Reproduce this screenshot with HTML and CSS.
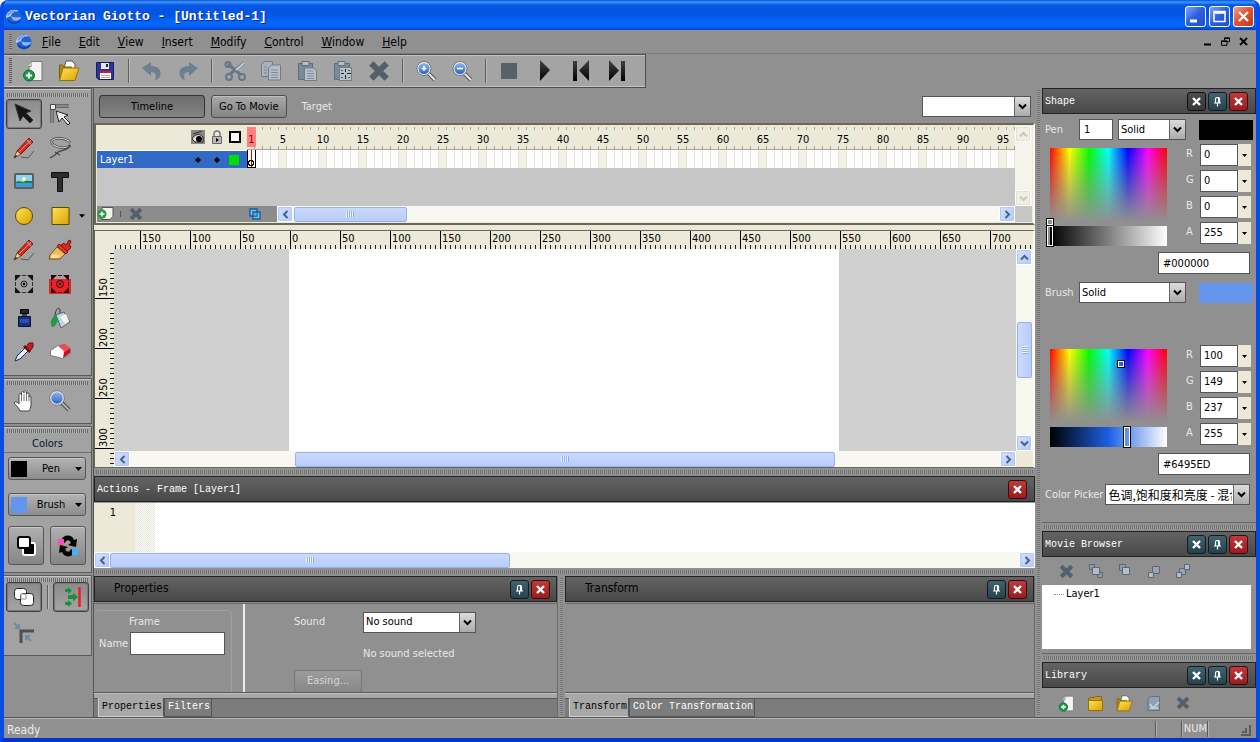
FILE: index.html
```html
<!DOCTYPE html>
<html lang="en">
<head>
    <meta charset="UTF-8">
    <meta name="viewport" content="width=device-width, initial-scale=1.0">
    <title>Vectorian Giotto - [Untitled-1]</title>
    <link rel="stylesheet" href="styles.css">
</head>
<body>
    <!-- shared icons -->
    <svg class="sprite" width="0" height="0">
        <defs>
            <linearGradient id="gold" x1="0" y1="0" x2="1" y2="1">
                <stop offset="0" stop-color="#ffe25a"/><stop offset="1" stop-color="#d9a300"/>
            </linearGradient>
            <linearGradient id="lens" x1="0" y1="0" x2="0" y2="1">
                <stop offset="0" stop-color="#8fb8f5"/><stop offset="1" stop-color="#2a63c4"/>
            </linearGradient>
            <linearGradient id="ink" x1="0" y1="0" x2="0" y2="1">
                <stop offset="0" stop-color="#444"/><stop offset="1" stop-color="#000"/>
            </linearGradient>
        </defs>
        <symbol id="i-x" viewBox="0 0 11 11"><path d="M2 2l7 7M9 2L2 9" stroke="#fff" stroke-width="2.4"/></symbol>
        <symbol id="i-pin" viewBox="0 0 11 11"><path d="M3.500 6.500V3a1.500 1.500 0 0 1 1.500-1.500h1.500V6.500M6.500 1.500a1 1 0 0 1 1 1v4M2 7h7M5.500 7v3.500" fill="none" stroke="#fff" stroke-width="1.200"/></symbol>
        <symbol id="i-chev" viewBox="0 0 9 9"><path d="M1 2.500l3.500 3.500L8 2.500" fill="none" stroke="currentColor" stroke-width="2"/></symbol>
        <symbol id="i-tri" viewBox="0 0 7 4"><path d="M0 0h7L3.500 4z" fill="currentColor"/></symbol>
        <symbol id="i-logo" viewBox="0 0 16 16">
            <circle cx="8" cy="8" r="7.500" fill="#1f62d6"/>
            <path d="M0 9C0 2 7-1 13 2C9 2 5 4 5 7z" fill="#c3d8f5"/>
            <path d="M1 6C3 1 9 0 13 3C9 2 5 3 3 7z" fill="#6f9ce6"/>
            <path d="M5 7c3 2 6 1 10 1c0 3-4 5-8 3z" fill="#8db8fa"/>
            <path d="M2 11c3 4 9 4 12 0" fill="none" stroke="#0c3fae" stroke-width="1.400"/>
        </symbol>
        <symbol id="i-new" viewBox="0 0 22 22">
            <path d="M9 1.500h11v19H7v-15z" fill="#f4f4f4" stroke="#777"/>
            <path d="M9 1.500v5H6" fill="#ddd" stroke="#888"/>
            <circle cx="7" cy="15.500" r="5.500" fill="#1f9a45" stroke="#0d6e2c"/>
            <path d="M7 12.500v6M4 15.500h6" stroke="#fff" stroke-width="2"/>
        </symbol>
        <symbol id="i-open" viewBox="0 0 22 22">
            <path d="M6 8l2-7h6l3 3v5H6z" fill="#fafafa" stroke="#555"/>
            <path d="M1.500 20V5h3l1 2h8v13z" fill="#b98a0c" stroke="#806000"/>
            <path d="M1.500 20.500L5 8h16l-4 12.500z" fill="url(#gold)" stroke="#94700a"/>
        </symbol>
        <symbol id="i-del" viewBox="0 0 20 20"><path d="M3 3l14 14M17 3L3 17" stroke="#53606c" stroke-width="5.500"/></symbol>
        <symbol id="i-pencil" viewBox="0 0 22 22">
            <path d="M8 20l7 1 6-7" fill="none" stroke="#555"/>
            <path d="M4 14L16 1l4 4L8 17z" fill="#e0291f" stroke="#7b1410"/>
            <path d="M6 15L18 3" stroke="#ff8a7a"/>
            <path d="M4 14l4 3-7 4z" fill="#f0d3a0" stroke="#6d4a20"/>
            <path d="M1 21l3-2-1-1z" fill="#000"/>
            <path d="M14 3l4 4" stroke="#999" stroke-width="1.500"/>
        </symbol>
    </svg>

    <div class="window">
        <header class="titlebar">
            <svg class="logo" width="16" height="16"><use href="#i-logo"/></svg>
            <h1 class="title">Vectorian Giotto - [Untitled-1]</h1>
            <button class="win-btn" aria-label="Minimize"><svg width="19" height="19"><path d="M4 14h7" stroke="#fff" stroke-width="3"/></svg></button>
            <button class="win-btn" aria-label="Maximize"><svg width="19" height="19"><path d="M4 4.500h11v10H4zM4 6h11" fill="none" stroke="#fff" stroke-width="1.500"/></svg></button>
            <button class="win-btn win-close" aria-label="Close"><svg width="19" height="19"><path d="M5 5l9 9M14 5l-9 9" stroke="#fff" stroke-width="2.200"/></svg></button>
        </header>

        <nav class="menubar">
            <span class="grip-v"></span>
            <svg class="logo" width="16" height="16"><use href="#i-logo"/></svg>
            <button class="menu"><u>F</u>ile</button>
            <button class="menu"><u>E</u>dit</button>
            <button class="menu"><u>V</u>iew</button>
            <button class="menu"><u>I</u>nsert</button>
            <button class="menu"><u>M</u>odify</button>
            <button class="menu"><u>C</u>ontrol</button>
            <button class="menu"><u>W</u>indow</button>
            <button class="menu"><u>H</u>elp</button>
            <span class="mdi">
                <button class="mdi-btn" aria-label="Minimize document"><svg width="9" height="9"><path d="M1 7.500h7" stroke="#000" stroke-width="2"/></svg></button>
                <button class="mdi-btn" aria-label="Restore document"><svg width="9" height="9"><path d="M3.500 3V.8h5v4H6.500M.5 3.800h5.500v4.500H.5zM3 1.500h6M.5 4.500h6" fill="none" stroke="#000"/></svg></button>
                <button class="mdi-btn" aria-label="Close document"><svg width="9" height="9"><path d="M1 1l7 7M8 1L1 8" stroke="#000" stroke-width="1.800"/></svg></button>
            </span>
        </nav>

        <div class="toolbar-row">
            <div class="toolbar">
                <span class="grip-v"></span>
                <button class="tb" aria-label="New"><svg width="22" height="22"><use href="#i-new"/></svg></button>
                <button class="tb" aria-label="Open"><svg width="22" height="22"><use href="#i-open"/></svg></button>
                <button class="tb" aria-label="Save"><svg width="22" height="22"><path d="M2.500 2.500h17v17h-15l-2-2z" fill="#2a35a0" stroke="#141c60"/><path d="M7 3h8v6H7z" fill="#e6e6ea"/><path d="M12 4h2v3h-2z" fill="#222"/><path d="M6 11h11v8H6z" fill="#fff"/><path d="M6 11h11v2H6z" fill="#d31d1d"/><path d="M7 15.500h9M7 17.500h9" stroke="#aaa"/></svg></button>
                <span class="sep"></span>
                <button class="tb" aria-label="Undo"><svg width="22" height="22"><path d="M1 8l9-6v4c8 0 11 5 9 10c-1 2-3 4-5 4c2-5 1-8-4-8v4z" fill="#6d7f90"/></svg></button>
                <button class="tb" aria-label="Redo"><svg width="22" height="22"><path d="M21 8l-9-6v4C4 6 1 11 3 16c1 2 3 4 5 4c-2-5-1-8 4-8v4z" fill="#6d7f90"/></svg></button>
                <span class="sep"></span>
                <button class="tb" aria-label="Cut"><svg width="22" height="22"><path d="M4 4l13 11M20 3L6 14" stroke="#66778a" stroke-width="3"/><path d="M20 3l-8 7" stroke="#c2ccd5" stroke-width="2"/><g fill="none" stroke="#66778a" stroke-width="2"><circle cx="4" cy="4.500" r="2.500"/><circle cx="5" cy="17" r="3"/><circle cx="18" cy="17" r="3"/></g></svg></button>
                <button class="tb" aria-label="Copy"><svg width="22" height="22"><path d="M1.500 4.500l3-3h8v15h-11z" fill="#a9b3bd" stroke="#6f7d8b"/><path d="M8.500 8l3-3h9v15h-12z" fill="#b7c0c9" stroke="#6f7d8b"/><path d="M11 10h7M11 12.500h7M11 15h7M11 17.500h7M4 7h3M4 10h3M4 13h3" stroke="#7d8a98"/></svg></button>
                <button class="tb" aria-label="Paste"><svg width="22" height="22"><path d="M2.500 3.500h14v16h-14z" fill="#7d8b99" stroke="#5d6d7d"/><path d="M6 1.500h7v4H6z" fill="#b7c0c9" stroke="#5d6d7d"/><path d="M8.500 8h9l3 3v9.500h-12z" fill="#b9c2cb" stroke="#6f7d8b"/><path d="M11 11h6M11 13.500h7M11 16h7M11 18.500h7" stroke="#7d8a98"/></svg></button>
                <button class="tb" aria-label="Paste in place"><svg width="22" height="22"><path d="M2.500 3.500h15v16h-15z" fill="#7d8b99" stroke="#5d6d7d"/><path d="M6 1.500h7v4H6z" fill="#b7c0c9" stroke="#5d6d7d"/><path d="M7.500 7.500h12v13h-12z" fill="#b9c2cb" stroke="#6f7d8b"/><path d="M13.500 9v3M13.500 15v4M9 13.500h3M15 13.500h4" stroke="#222"/><path d="M9 10.500h2M16 10.500h2M9 17.500h2M16 17.500h2" stroke="#556"/></svg></button>
                <button class="tb" aria-label="Delete"><svg width="22" height="22"><use href="#i-del"/></svg></button>
                <span class="sep"></span>
                <button class="tb" aria-label="Zoom in"><svg width="22" height="22"><path d="M13 13l7 7" stroke="#555" stroke-width="4"/><path d="M13 13l7 7" stroke="#e8e8e8" stroke-width="2"/><circle cx="9" cy="8.500" r="7" fill="#eee" stroke="#777"/><circle cx="9" cy="8.500" r="5.500" fill="url(#lens)"/><path d="M9 6v5M6.500 8.500h5" stroke="#fff" stroke-width="1.600"/></svg></button>
                <button class="tb" aria-label="Zoom out"><svg width="22" height="22"><path d="M13 13l7 7" stroke="#555" stroke-width="4"/><path d="M13 13l7 7" stroke="#e8e8e8" stroke-width="2"/><circle cx="9" cy="8.500" r="7" fill="#eee" stroke="#777"/><circle cx="9" cy="8.500" r="5.500" fill="url(#lens)"/><path d="M6 8.500h6" stroke="#fff" stroke-width="1.600"/></svg></button>
                <span class="sep"></span>
                <button class="tb" aria-label="Stop"><svg width="22" height="22"><path d="M3 3h16v16H3z" fill="#596067"/></svg></button>
                <button class="tb" aria-label="Play"><svg width="22" height="22"><path d="M6 0l10 10-10 11z" fill="url(#ink)"/></svg></button>
                <button class="tb" aria-label="Go to start"><svg width="22" height="22"><path d="M3 1h4v20H3zM19 0L9 10.500 19 21z" fill="url(#ink)"/></svg></button>
                <button class="tb" aria-label="Go to end"><svg width="22" height="22"><path d="M15 1h4v20h-4zM3 0l10 10.500L3 21z" fill="url(#ink)"/></svg></button>
            </div>
        </div>

        <main class="main">
            <!-- toolbox -->
            <aside class="toolbox">
                <div class="box">
                    <span class="grip-h"></span>
                    <div class="tools">
                        <button class="tool selected" aria-label="Select"><svg width="22" height="22"><path d="M2 1l16 7-5 2 7 7-3 3-7-7-3 5z" fill="#151515" stroke="#333"/></svg></button>
                        <button class="tool" aria-label="Subselect"><svg width="22" height="22"><path d="M3 20V3h17" fill="none" stroke="#333" stroke-width="3"/><path d="M3 20V3h17" fill="none" stroke="#ddd"/><path d="M1.500 1.500h5v5h-5z" fill="#eee" stroke="#444"/><path d="M7 8l12 4-4 2 6 6-2 2-6-7-3 4z" fill="#eee" stroke="#222"/></svg></button>
                        <span></span>
                        <button class="tool" aria-label="Pencil"><svg width="22" height="22"><use href="#i-pencil"/></svg></button>
                        <button class="tool" aria-label="Lasso"><svg width="22" height="22"><ellipse cx="12" cy="6" rx="9.500" ry="4.500" fill="none" stroke="#444" stroke-width="2.500" transform="rotate(8 12 6)"/><ellipse cx="12" cy="6" rx="9.500" ry="4.500" fill="none" stroke="#ccc" transform="rotate(8 12 6)"/><path d="M21 8c-1 4-6 5-12 7l-3 3-5 3M6 15l5 3" fill="none" stroke="#444" stroke-width="1.300"/></svg></button>
                        <span></span>
                        <button class="tool" aria-label="Image"><svg width="22" height="22"><rect x="1" y="2" width="20" height="16" rx="2" fill="#5a5f66"/><path d="M3 4h16v12H3z" fill="#8fd0f5"/><path d="M3 12h16v4H3z" fill="#3e9ad8"/><path d="M3 11c3-2 5 0 7 0c3-2 6-1 9-1v2H3z" fill="#27803a"/><circle cx="11" cy="8" r="2" fill="#fff8a0"/></svg></button>
                        <button class="tool" aria-label="Text"><svg width="22" height="22"><path d="M2.500 1.500h17v5h-6v14h-5v-14h-6z" fill="#2d2d2d" stroke="#111"/></svg></button>
                        <span></span>
                        <button class="tool" aria-label="Ellipse"><svg width="22" height="22"><circle cx="11" cy="11" r="8.500" fill="url(#gold)" stroke="#5d4800"/></svg></button>
                        <button class="tool" aria-label="Rectangle"><svg width="22" height="22"><path d="M3 2.500h17v17H3z" fill="url(#gold)" stroke="#5d4800"/></svg></button>
                        <button class="tool-more" aria-label="More shapes"><svg width="6" height="4"><use href="#i-tri"/></svg></button>
                        <button class="tool" aria-label="Pen"><svg width="22" height="22"><use href="#i-pencil"/></svg></button>
                        <button class="tool" aria-label="Brush"><svg width="24" height="22"><path d="M13 6l3-2 2 2 3-5 2 1-2 5 2 0-1 3-5 3z" fill="#dd2a20" stroke="#7d1510"/><path d="M11 5l9 8-2 2-9-8z" fill="#e63a2e" stroke="#7d1510"/><path d="M9 8l8 7-5 5H1l1-4z" fill="#f0b95a" stroke="#80520f"/><path d="M4 15l8 1-2 3H3z" fill="#fbe0a5"/></svg></button>
                        <span></span>
                        <button class="tool" aria-label="Transform shape"><svg width="22" height="22"><path d="M2 2h6L2 8zM14 2h6v6zM20 14v6h-6zM8 20H2v-6z" fill="#111"/><path d="M9 2.500h4M9 19.500h4M2.500 9v4M19.500 9v4" stroke="#333"/><circle cx="11" cy="11" r="3" fill="none" stroke="#222"/><circle cx="11" cy="11" r="1.200"/></svg></button>
                        <button class="tool" aria-label="Transform fill"><svg width="22" height="22"><path d="M0 6h22v15H0z" fill="#e8232b"/><path d="M2 2h6L2 8zM14 2h6v6zM20 14v6h-6zM8 20H2v-6z" fill="#2a0505"/><path d="M9 2.500h4M9 19.500h4M2.500 9v4M19.500 9v4" stroke="#300"/><circle cx="11" cy="11" r="3.500" fill="none" stroke="#300"/><circle cx="11" cy="11" r="1.200"/></svg></button>
                        <span></span>
                        <button class="tool" aria-label="Ink bottle"><svg width="22" height="22"><path d="M7.500 2.500h8v4h-8z" fill="#222" stroke="#000"/><path d="M9 7h5v3H9z" fill="#345"/><path d="M5.500 9.500h12v10h-12z" fill="#16307e" stroke="#0a143d"/><path d="M7 12h9v4H7z" fill="#2c4fb0"/></svg></button>
                        <button class="tool" aria-label="Paint bucket"><svg width="22" height="22"><path d="M6 10C6 2 10-1 11 3v6" fill="none" stroke="#333"/><path d="M7 8l8-3 6 10-9 6z" fill="#c3d4de" stroke="#56646e"/><path d="M11 10l6-3 3 7-4 3z" fill="#eaf3f8"/><path d="M7 8c-6 3-6 9-4 12c4 0 4-4 6-6z" fill="#219a45"/></svg></button>
                        <span></span>
                        <button class="tool" aria-label="Eyedropper"><svg width="22" height="22"><path d="M2 20l2-5 9-9 3 3-9 9z" fill="#e9eefc" stroke="#16257a"/><path d="M11 5l6 6" stroke="#6d0f0f" stroke-width="2.500"/><path d="M13 6l3-4h4v4l-3 4z" fill="#c31d1d" stroke="#6d0f0f"/></svg></button>
                        <button class="tool" aria-label="Eraser"><svg width="22" height="22"><path d="M1.500 9.500l8-5 6-1 6 4v5l-8 5-12-3z" fill="#fff" stroke="#777"/><path d="M9 5l7-2 5 4-6 4z" fill="#f4474f"/><path d="M15 11l6-4v5l-7 5z" fill="#c3121b"/><path d="M2 10l7-5 6 5-2 2z" fill="#fdfdfd"/></svg></button>
                        <span></span>
                    </div>
                </div>
                <div class="box">
                    <span class="grip-h"></span>
                    <div class="tools">
                        <button class="tool" aria-label="Hand"><svg width="22" height="22"><path d="M7 21c-1-3-4-6-6-8c1-2 3-1 5 1V5c0-2 2-2 2.500 0V3c0-2 2.500-2 2.500 0V2c0-2 2.500-1.500 2.500 0v2c0-1.500 2.500-1.500 2.500 0v3c0-1.500 2-1.500 2 0v8c0 3-1 4-2 6z" fill="#fff" stroke="#444"/><path d="M8.500 5v6M11 4v7M13.500 4v7M16 6v5" stroke="#777"/></svg></button>
                        <button class="tool" aria-label="Zoom"><svg width="22" height="22"><path d="M12 12l8 8" stroke="#555" stroke-width="4"/><path d="M12 12l8 8" stroke="#ccc" stroke-width="1.500"/><circle cx="8" cy="8" r="6.500" fill="url(#lens)" stroke="#e6e6e6" stroke-width="1.500"/><circle cx="8" cy="8" r="7.300" fill="none" stroke="#555" stroke-width=".6"/></svg></button>
                        <span></span>
                    </div>
                </div>
                <div class="box colors">
                    <span class="grip-h"></span>
                    <h2 class="box-title">Colors</h2>
                    <button class="color-btn"><i class="chip chip-pen"></i>Pen<svg width="7" height="4"><use href="#i-tri"/></svg></button>
                    <button class="color-btn"><i class="chip chip-brush"></i>Brush<svg width="7" height="4"><use href="#i-tri"/></svg></button>
                    <div class="big-row">
                        <button class="big-btn" aria-label="Default colors"><svg width="22" height="22"><rect x="8" y="8" width="12" height="12" rx="2" stroke="#fff" stroke-width="2"/><rect x="3" y="2" width="12" height="11" rx="2" fill="#fff" stroke="#000" stroke-width="2"/></svg></button>
                        <button class="big-btn" aria-label="Swap colors"><svg width="22" height="24"><path d="M4 7C6 0 15 0 17 6l3-1-1 8-8-2 3-2C12 5 9 6 8 9z"/><path d="M18 17C16 24 7 24 5 18l-3 1 1-8 8 2-3 2c2 4 5 3 6 0z"/><path d="M1 5h6v6H1z" fill="#ff4fb5"/><path d="M15 15h6v6h-6z" fill="#35b8ff"/></svg></button>
                    </div>
                </div>
                <div class="box options">
                    <span class="grip-h"></span>
                    <div class="option-row">
                        <button class="tool selected" aria-label="Merge shapes"><svg width="22" height="22"><rect x="1.500" y="2.500" width="12" height="11" rx="3" fill="#fff" stroke="#222"/><rect x="7.500" y="7.500" width="13" height="12" rx="3" fill="#fff" stroke="#222"/><path d="M8 8h5v5H8z" fill="#fff" stroke="#999"/></svg></button>
                        <span class="sep"></span>
                        <button class="tool selected" aria-label="Snap"><svg width="22" height="22"><path d="M19.500 1v20" stroke="#f01c24" stroke-width="2.500"/><path d="M5 3h3V1l4 3.500L8 8V6H5zM5 16h3v-2l4 3.500L8 21v-2H5zM8 9h5V6.500l5 4.500-5 4.500V13H8z" fill="#16923a"/></svg></button>
                    </div>
                    <button class="tool" aria-label="Snap to corner"><svg width="22" height="22"><path d="M8 21V9h13" fill="none" stroke="#4f4f4f" stroke-width="3"/><path d="M18 19l-5-5m0 4v-4h4M1 1l5 5m0-4v4H2" fill="none" stroke="#6d8aa3" stroke-width="2"/></svg></button>
                </div>
            </aside>

            <div class="center">
                <div class="scene-bar">
                    <button class="btn pressed">Timeline</button>
                    <button class="btn">Go To Movie</button>
                    <label class="light" for="target">Target</label>
                    <span class="combo combo-zoom"><select id="target"><option></option></select><svg width="9" height="9"><use href="#i-chev"/></svg></span>
                </div>

                <!-- timeline -->
                <div class="timeline">
                    <div class="tl-top">
                        <div class="layers">
                            <div class="layers-head">
                                <svg width="14" height="14"><path d="M0 0h14v14H0z" fill="#888"/><path d="M1 9c2-5 8-6 11-2v5H4z" fill="#ddd" stroke="#222"/><circle cx="8" cy="9" r="3"/><path d="M2 4l9-3" stroke="#333"/></svg>
                                <svg width="12" height="14"><path d="M3 7V4c0-4 6-4 6 0v3" fill="none" stroke="#777" stroke-width="1.500"/><path d="M1.500 6.500h9v7h-9z" fill="#bbb" stroke="#666"/><path d="M5 8l3 2-3 2z"/></svg>
                                <svg width="12" height="12"><path d="M1 1h10v10H1z" fill="#fff" stroke="#000" stroke-width="2"/></svg>
                            </div>
                            <div class="layer">
                                <span class="layer-name">Layer1</span>
                                <svg width="14" height="6"><path d="M7 0l3 3-3 3-3-3z"/></svg>
                                <svg width="12" height="6"><path d="M6 0l3 3-3 3-3-3z"/></svg>
                                <i class="layer-color"></i>
                            </div>
                        </div>
                        <div class="frames">
                            <div class="frames-head">
                                <span class="playhead">1</span>
                                <span>5</span><span>10</span><span>15</span><span>20</span><span>25</span><span>30</span><span>35</span><span>40</span><span>45</span><span>50</span><span>55</span><span>60</span><span>65</span><span>70</span><span>75</span><span>80</span><span>85</span><span>90</span><span>95</span>
                            </div>
                            <div class="frames-row"><span class="keyframe"></span></div>
                        </div>
                        <div class="scroll scroll-v disabled">
                            <button aria-label="Scroll up"><svg class="up" width="9" height="9"><use href="#i-chev"/></svg></button>
                            <span class="track"></span>
                            <button aria-label="Scroll down"><svg width="9" height="9"><use href="#i-chev"/></svg></button>
                        </div>
                    </div>
                    <div class="tl-bottom">
                        <div class="layer-tools">
                            <button aria-label="Add layer"><svg width="17" height="16"><path d="M5 1.500h11v9l-3 3H5z" fill="#f4f4ea" stroke="#555"/><circle cx="5" cy="8" r="4.500" fill="#1f9a45"/><path d="M5 5.500v5M2.500 8h5" stroke="#fff" stroke-width="1.500"/></svg></button>
                            <i class="mini-sep"></i>
                            <button aria-label="Delete layer"><svg width="14" height="14"><use href="#i-del"/></svg></button>
                            <button class="onion" aria-label="Onion skin"><svg width="12" height="12"><path d="M1 1h7v7H1zM4 4h7v7H4z" fill="#6fc4f0" stroke="#0b5fa5" stroke-width="1.300"/><path d="M5 5h2.500v2.500H5z" fill="#9a9a9a"/></svg></button>
                        </div>
                        <div class="scroll scroll-h">
                            <button aria-label="Scroll left"><svg class="left" width="9" height="9"><use href="#i-chev"/></svg></button>
                            <span class="track"><i class="thumb thumb-timeline"></i></span>
                            <button aria-label="Scroll right"><svg class="right" width="9" height="9"><use href="#i-chev"/></svg></button>
                        </div>
                        <span class="tl-corner"></span>
                    </div>
                </div>

                <!-- stage -->
                <div class="stage">
                    <div class="ruler-h">
                        <span>150</span><span>100</span><span>50</span><span>0</span><span>50</span><span>100</span><span>150</span><span>200</span><span>250</span><span>300</span><span>350</span><span>400</span><span>450</span><span>500</span><span>550</span><span>600</span><span>650</span><span>700</span>
                    </div>
                    <div class="ruler-v"><span>150</span><span>200</span><span>250</span><span>300</span></div>
                    <div class="canvas"><div class="page"></div></div>
                    <div class="scroll scroll-v">
                        <button aria-label="Scroll up"><svg class="up" width="9" height="9"><use href="#i-chev"/></svg></button>
                        <span class="track"><i class="thumb thumb-stage-v"></i></span>
                        <button aria-label="Scroll down"><svg width="9" height="9"><use href="#i-chev"/></svg></button>
                    </div>
                    <div class="scroll scroll-h">
                        <button aria-label="Scroll left"><svg class="left" width="9" height="9"><use href="#i-chev"/></svg></button>
                        <span class="track"><i class="thumb thumb-stage-h"></i></span>
                        <button aria-label="Scroll right"><svg class="right" width="9" height="9"><use href="#i-chev"/></svg></button>
                    </div>
                </div>

                <div class="split-h"></div>

                <!-- actions -->
                <section class="panel">
                    <div class="panel-head">
                        <h2>Actions - Frame [Layer1]</h2>
                        <button class="head-btn red" aria-label="Close"><svg width="11" height="11"><use href="#i-x"/></svg></button>
                    </div>
                    <div class="code">
                        <span class="line-no">1</span>
                        <i class="fold"></i>
                        <textarea class="code-text" aria-label="Script"></textarea>
                    </div>
                    <div class="scroll scroll-h">
                        <button aria-label="Scroll left"><svg class="left" width="9" height="9"><use href="#i-chev"/></svg></button>
                        <span class="track"><i class="thumb thumb-code"></i></span>
                        <button aria-label="Scroll right"><svg class="right" width="9" height="9"><use href="#i-chev"/></svg></button>
                    </div>
                </section>

                <div class="split-h"></div>

                <div class="bottom">
                    <section class="panel properties">
                        <div class="panel-head dim">
                            <h2>Properties</h2>
                            <button class="head-btn" aria-label="Pin"><svg width="11" height="11"><use href="#i-pin"/></svg></button>
                            <button class="head-btn red" aria-label="Close"><svg width="11" height="11"><use href="#i-x"/></svg></button>
                        </div>
                        <div class="prop-body">
                            <div class="frame-box">
                                <h3>Frame</h3>
                                <div class="name-row">
                                    <label for="frame-name">Name</label>
                                    <input class="field" id="frame-name" type="text">
                                </div>
                            </div>
                            <div class="sound">
                                <label for="sound">Sound</label>
                                <span class="combo"><select id="sound"><option>No sound</option></select><svg width="9" height="9"><use href="#i-chev"/></svg></span>
                                <p class="sound-note">No sound selected</p>
                                <button class="btn easing" disabled>Easing...</button>
                            </div>
                        </div>
                        <div class="tabs"><button class="tab active">Properties</button><button class="tab">Filters</button></div>
                    </section>
                    <div class="split-v"></div>
                    <section class="panel transform">
                        <div class="panel-head dim">
                            <h2>Transform</h2>
                            <button class="head-btn" aria-label="Pin"><svg width="11" height="11"><use href="#i-pin"/></svg></button>
                            <button class="head-btn red" aria-label="Close"><svg width="11" height="11"><use href="#i-x"/></svg></button>
                        </div>
                        <div class="prop-body"></div>
                        <div class="tabs"><button class="tab active">Transform</button><button class="tab">Color Transformation</button></div>
                    </section>
                </div>
            </div>

            <div class="split-v"></div>

            <!-- right dock -->
            <aside class="dock">
                <section class="panel shape">
                    <div class="panel-head">
                        <h2>Shape</h2>
                        <button class="head-btn dark" aria-label="Collapse"><svg width="11" height="11"><use href="#i-x"/></svg></button>
                        <button class="head-btn" aria-label="Pin"><svg width="11" height="11"><use href="#i-pin"/></svg></button>
                        <button class="head-btn red" aria-label="Close"><svg width="11" height="11"><use href="#i-x"/></svg></button>
                    </div>
                    <div class="shape-body">
                        <div class="fill-row">
                            <label for="pen-size">Pen</label>
                            <input class="field pen-size" id="pen-size" type="text" value="1">
                            <span class="combo"><select aria-label="Pen style"><option>Solid</option></select><svg width="9" height="9"><use href="#i-chev"/></svg></span>
                            <i class="swatch chip-pen"></i>
                        </div>
                        <div class="color-area">
                            <div class="picker">
                                <div class="spectrum"><i class="spot spot-pen"></i></div>
                                <div class="shade shade-pen"><i class="slider slider-pen"></i></div>
                            </div>
                            <div class="channels">
                                <label for="pen-r">R</label><span class="spin"><input id="pen-r" type="text" value="0"><button aria-label="Red"><svg width="5" height="3"><use href="#i-tri"/></svg></button></span>
                                <label for="pen-g">G</label><span class="spin"><input id="pen-g" type="text" value="0"><button aria-label="Green"><svg width="5" height="3"><use href="#i-tri"/></svg></button></span>
                                <label for="pen-b">B</label><span class="spin"><input id="pen-b" type="text" value="0"><button aria-label="Blue"><svg width="5" height="3"><use href="#i-tri"/></svg></button></span>
                                <label for="pen-a">A</label><span class="spin"><input id="pen-a" type="text" value="255"><button aria-label="Alpha"><svg width="5" height="3"><use href="#i-tri"/></svg></button></span>
                            </div>
                        </div>
                        <input class="field hex" type="text" value="#000000" aria-label="Pen color">
                        <div class="fill-row">
                            <label for="brush-style">Brush</label>
                            <span class="combo"><select id="brush-style"><option>Solid</option></select><svg width="9" height="9"><use href="#i-chev"/></svg></span>
                            <i class="swatch chip-brush"></i>
                        </div>
                        <div class="color-area brush-area">
                            <div class="picker">
                                <div class="spectrum"><i class="spot spot-brush"></i></div>
                                <div class="shade shade-brush"><i class="slider slider-brush"></i></div>
                            </div>
                            <div class="channels">
                                <label for="brush-r">R</label><span class="spin"><input id="brush-r" type="text" value="100"><button aria-label="Red"><svg width="5" height="3"><use href="#i-tri"/></svg></button></span>
                                <label for="brush-g">G</label><span class="spin"><input id="brush-g" type="text" value="149"><button aria-label="Green"><svg width="5" height="3"><use href="#i-tri"/></svg></button></span>
                                <label for="brush-b">B</label><span class="spin"><input id="brush-b" type="text" value="237"><button aria-label="Blue"><svg width="5" height="3"><use href="#i-tri"/></svg></button></span>
                                <label for="brush-a">A</label><span class="spin"><input id="brush-a" type="text" value="255"><button aria-label="Alpha"><svg width="5" height="3"><use href="#i-tri"/></svg></button></span>
                            </div>
                        </div>
                        <input class="field hex" type="text" value="#6495ED" aria-label="Brush color">
                        <div class="picker-row">
                            <label for="color-picker">Color Picker</label>
                            <span class="combo combo-cjk"><select id="color-picker"><option>色调,饱和度和亮度 - 混合</option></select><svg width="9" height="9"><use href="#i-chev"/></svg></span>
                        </div>
                    </div>
                </section>
                <div class="split-h"></div>
                <section class="panel movie">
                    <div class="panel-head">
                        <h2>Movie Browser</h2>
                        <button class="head-btn" aria-label="Collapse"><svg width="11" height="11"><use href="#i-x"/></svg></button>
                        <button class="head-btn" aria-label="Pin"><svg width="11" height="11"><use href="#i-pin"/></svg></button>
                        <button class="head-btn red" aria-label="Close"><svg width="11" height="11"><use href="#i-x"/></svg></button>
                    </div>
                    <div class="dock-tools">
                        <button aria-label="Delete"><svg width="15" height="15"><use href="#i-del"/></svg></button>
                        <button aria-label="Bring to front"><svg width="16" height="16"><g fill="#8e9aa6" stroke="#56697c"><path d="M1.500 1.500h5v5h-5zM9.500 9.500h5v5h-5z"/><path d="M4.500 4.500h7v7h-7z" fill="#b5bec7"/></g></svg></button>
                        <button aria-label="Bring forward"><svg width="16" height="16"><g fill="#8e9aa6" stroke="#56697c"><path d="M2.500 1.500h6v6h-6z"/><path d="M5.500 4.500h7v7h-7z" fill="#b5bec7"/></g></svg></button>
                        <button aria-label="Send backward"><svg width="16" height="16"><g fill="#9aa5b0" stroke="#56697c"><path d="M6.500 3.500h7v7h-7z"/><path d="M2.500 9.500h5v5h-5z" fill="#b5bec7"/></g></svg></button>
                        <button aria-label="Send to back"><svg width="16" height="16"><g fill="#9aa5b0" stroke="#56697c"><path d="M4.500 5.500h6v6h-6z"/><path d="M9.500 1.500h5v5h-5zM1.500 9.500h5v5h-5z" fill="#b5bec7"/></g></svg></button>
                    </div>
                    <ul class="tree"><li>Layer1</li></ul>
                </section>
                <div class="split-h"></div>
                <section class="panel library">
                    <div class="panel-head">
                        <h2>Library</h2>
                        <button class="head-btn" aria-label="Collapse"><svg width="11" height="11"><use href="#i-x"/></svg></button>
                        <button class="head-btn" aria-label="Pin"><svg width="11" height="11"><use href="#i-pin"/></svg></button>
                        <button class="head-btn red" aria-label="Close"><svg width="11" height="11"><use href="#i-x"/></svg></button>
                    </div>
                    <div class="dock-tools">
                        <button aria-label="New symbol"><svg width="17" height="17"><use href="#i-new"/></svg></button>
                        <button aria-label="New folder"><svg width="17" height="17"><path d="M1.500 15V3.500l3-1h3l1-1h6v13" fill="#c89a12" stroke="#8a6708"/><path d="M1.500 5.500h14v10h-14z" fill="url(#gold)" stroke="#94700a"/></svg></button>
                        <button aria-label="Open library"><svg width="17" height="17"><use href="#i-open"/></svg></button>
                        <button aria-label="Properties"><svg width="17" height="17"><path d="M3 3.500l3-2h8.500v14H3z" fill="#8fa0b0" stroke="#607385"/><path d="M5 9l3 4 6-6M5 13h8" fill="none" stroke="#c9d4de" stroke-width="1.500"/></svg></button>
                        <button aria-label="Delete"><svg width="14" height="14"><use href="#i-del"/></svg></button>
                    </div>
                </section>
            </aside>
        </main>

        <footer class="statusbar">
            <span class="status-text">Ready</span>
            <span class="status-cell"></span>
            <span class="status-cell">NUM</span>
            <span class="status-end"><svg width="12" height="12"><path d="M9 0v10H0M5 3v4H1" fill="none" stroke="#5d5d5d" stroke-width="2"/></svg></span>
        </footer>
    </div>
</body>
</html>
```
FILE: styles.css
```css
* {
    margin: 0;
    padding: 0;
    box-sizing: border-box;
}

body {
    font-family: "DejaVu Sans Condensed", "Noto Sans", "Noto Sans CJK SC", sans-serif;
    font-size: 11px;
    line-height: 14px;
    color: #000;
    background: #fff;
}

button,
input,
select,
textarea {
    font: inherit;
    color: inherit;
    border: none;
    background: none;
    border-radius: 0;
    outline: none;
}

button {
    display: flex;
    align-items: center;
    justify-content: center;
}

svg {
    display: block;
    flex: none;
}

h1, h2, h3 {
    font-size: inherit;
    font-weight: normal;
}

label {
    color: #e8e8e8;
}

.sprite {
    position: absolute;
}

.window {
    height: 100vh;
    min-height: 700px;
    display: flex;
    flex-direction: column;
    background: #909090;
    border: 4px solid #0a4be6;
    border-top: none;
    border-bottom-color: #0334c9;
    border-radius: 8px 8px 0 0;
    overflow: hidden;
}

/* title bar */
.titlebar {
    flex: none;
    height: 30px;
    margin: 0 -4px;
    padding: 3px 6px 0;
    display: flex;
    align-items: center;
    gap: 3px;
    background: linear-gradient(#0a50d8 0, #3f96ff 2px, #0557e4 5px, #0354e2 14px, #0465fb 22px, #0465fb 26px, #033fd0 30px);
}

.title {
    flex: 1;
    font-family: "Liberation Mono", monospace;
    font-size: 13px;
    font-weight: bold;
    color: #fff;
    text-shadow: 1px 1px 0 #0a2a80;
    white-space: pre;
}

.win-btn {
    width: 21px;
    height: 21px;
    border: 1px solid #fff;
    border-radius: 3px;
    background: linear-gradient(135deg, #7ea3f5, #2a5ee0 50%, #1c50d0);
}

.win-close {
    background: linear-gradient(135deg, #f0a088, #e0502c 50%, #c5391a);
}

/* menu */
.menubar {
    flex: none;
    height: 24px;
    padding: 0 8px 0 5px;
    display: flex;
    align-items: center;
    font-size: 12px;
    border-bottom: 1px solid #7a7a7a;
}

.menubar .logo {
    margin: 0 1px 0 4px;
}

.menu {
    padding: 0 9px;
}

.mdi {
    margin-left: auto;
    display: flex;
    gap: 9px;
}

.mdi-btn {
    width: 9px;
    height: 9px;
}

.grip-v {
    width: 3px;
    height: 16px;
    background: repeating-linear-gradient(#5f5f5f 0 1px, #a0a0a0 1px 2px);
}

.grip-h {
    display: block;
    height: 4px;
    margin: 0 1px;
    background: repeating-linear-gradient(90deg, #6a6a6a 0 1px, #b0b0b0 1px 2px);
}

/* main toolbar */
.toolbar-row {
    flex: none;
    height: 34px;
    display: flex;
}

.toolbar {
    display: flex;
    align-items: center;
    gap: 4px;
    padding: 0 12px 0 5px;
    background: #a4a4a4;
    border: 1px solid #4e4e4e;
    border-left: none;
    box-shadow: inset 0 1px 0 #c2c2c2, inset 0 -1px 0 #c2c2c2;
}

.toolbar .grip-v {
    height: 26px;
    margin-right: 1px;
}

.tb {
    width: 32px;
    height: 28px;
}

.sep {
    width: 1px;
    height: 24px;
    margin: 0 3px;
    background: #5e5e5e;
    box-shadow: 1px 0 0 #bbb;
}

.main {
    flex: 1;
    min-height: 0;
    display: flex;
}

/* toolbox */
.toolbox {
    flex: none;
    width: 88px;
    margin-right: 2px;
}

.box {
    padding: 4px 2px 8px;
    margin-bottom: 2px;
    background: #a2a2a2;
    border: 1px solid #5a5a5a;
    border-left: none;
    box-shadow: inset 0 1px 0 #c4c4c4;
}

.tools {
    display: grid;
    grid-template-columns: 36px 36px 8px;
    gap: 4px 0;
    margin-top: 2px;
}

.tool {
    width: 36px;
    height: 30px;
}

.tool.selected {
    border: 1px solid #3f3f3f;
    border-radius: 3px;
    background: linear-gradient(#8a8a8a, #a6a6a6);
    box-shadow: inset 0 0 1px 1px #777;
}

.box .tools .tool-more {
    width: 8px;
}

.box + .box {
    padding-top: 2px;
    padding-bottom: 7px;
}

.box + .box .tools {
    margin-top: 1px;
}

.box-title {
    text-align: center;
    color: #0a1430;
    margin: 4px -2px 0;
    padding-bottom: 1px;
    border-bottom: 1px solid #707070;
}

.color-btn {
    width: 78px;
    height: 23px;
    margin: 4px auto 13px 2px;
    padding: 0 3px 0 2px;
    justify-content: space-between;
    border: 1px solid #555;
    border-radius: 3px;
    background: linear-gradient(#b4b4b4, #8c8c8c);
    box-shadow: inset 0 1px 0 #c8c8c8;
}

.color-btn + .color-btn {
    margin-bottom: 10px;
}

.chip {
    width: 16px;
    height: 16px;
}

.chip-pen {
    background: #000;
}

.chip-brush {
    background: #6495ed;
}

.big-row {
    display: flex;
    gap: 6px;
    padding-left: 2px;
}

.big-btn {
    width: 36px;
    height: 39px;
    border: 1px solid #555;
    border-radius: 3px;
    background: linear-gradient(#b0b0b0, #858585);
    box-shadow: inset 0 1px 0 #c8c8c8;
}

.option-row {
    display: flex;
    align-items: center;
    justify-content: space-between;
    margin: 0 0 6px;
}

/* buttons and fields */
.btn {
    height: 23px;
    padding: 0 7px;
    border: 1px solid #4c4c4c;
    border-radius: 3px;
    background: linear-gradient(#a8a8a8, #858585);
    box-shadow: inset 0 1px 0 #c0c0c0;
}

.btn.pressed {
    width: 106px;
    border-color: #333;
    background: linear-gradient(#6c6c6c, #848484);
    box-shadow: none;
}

.combo {
    position: relative;
    display: flex;
    height: 21px;
    background: #fff;
    border: 1px solid #555;
}

.combo select {
    appearance: none;
    flex: 1;
    width: 100%;
    padding: 0 17px 0 2px;
}

.combo svg {
    position: absolute;
    top: 0;
    right: 0;
    width: 16px;
    height: 19px;
    padding: 5px 3px;
    background: linear-gradient(#dcdcdc, #ababab);
    border-left: 1px solid #666;
    pointer-events: none;
}

.field {
    height: 21px;
    padding: 0 4px;
    background: #fff;
    border: 1px solid #555;
}

/* timeline */
.center {
    flex: 1;
    min-width: 0;
    display: flex;
    flex-direction: column;
    border-left: 1px solid #555;
    margin-left: -1px;
}

.scene-bar {
    flex: none;
    height: 35px;
    padding: 2px 4px 0 5px;
    display: flex;
    align-items: center;
    gap: 6px;
}

.scene-bar label {
    margin-left: 9px;
}

.combo-zoom {
    width: 109px;
    margin-left: auto;
}

.timeline {
    flex: none;
    margin-bottom: 5px;
    padding: 1px;
    border: 2px solid #6b675b;
    border-color: #6b675b #fdfbf0 #6b675b #6b675b;
    background: #ece9d8;
    box-shadow: 0 5px 0 #ece9d8;
}

.tl-top {
    display: flex;
    height: 80px;
    background: #c6c6c6;
}

.layers {
    width: 150px;
    flex: none;
}

.layers-head {
    height: 24px;
    padding: 0 6px 3px 0;
    display: flex;
    align-items: center;
    justify-content: flex-end;
    gap: 6px;
    background: #ece9d8;
}

.layer {
    height: 18px;
    padding: 0 8px 0 3px;
    display: flex;
    align-items: center;
    gap: 6px;
    background: #316ac5;
    border-top: 1px solid #fff;
}

.layer-name {
    flex: 1;
    color: #fff;
}

.layer-color {
    width: 10px;
    height: 10px;
    background: #00e000;
}

.frames {
    flex: 1;
    min-width: 0;
    overflow: hidden;
}

.frames-head {
    display: flex;
    height: 24px;
    padding-top: 1px;
    line-height: 25px;
    border-bottom: 1px solid #aca899;
    background:
        repeating-linear-gradient(90deg, transparent 0 7px, #aca899 7px 8px) 0 1px / 100% 3px no-repeat,
        repeating-linear-gradient(90deg, transparent 0 7px, #aca899 7px 8px) 0 100% / 100% 3px no-repeat,
        #ece9d8;
}

.frames-head span {
    flex: none;
    width: 40px;
    text-align: center;
}

.frames-head .playhead {
    width: 9px;
    height: 20px;
    margin-right: 7px;
    color: #900;
    background: #ff8080;
}

.frames-row {
    height: 18px;
    background:
        repeating-linear-gradient(90deg, transparent 0 7px, #e6e2d4 7px 8px),
        repeating-linear-gradient(90deg, #fff 0 32px, #f4f1e9 32px 40px);
}

.keyframe {
    display: block;
    width: 9px;
    height: 18px;
    border: 1px solid #000;
    border-top: none;
    background:
        radial-gradient(circle at 3px 13px, transparent 0 2px, #000 2px 3px, transparent 3px),
        linear-gradient(90deg, #fff 3px, #e00000 3px 4px, #fff 4px);
}

.tl-bottom {
    display: flex;
    height: 16px;
}

.layer-tools {
    width: 180px;
    flex: none;
    display: flex;
    align-items: center;
    background: #8c8c8c;
}

.mini-sep {
    width: 1px;
    height: 6px;
    margin: 0 8px 0 6px;
    background: #555;
}

.onion {
    margin: 0 16px 0 auto;
}

.tl-corner {
    width: 17px;
    background: #c6c6c6;
}

/* scroll bars */
.scroll {
    display: flex;
    background: #f8f7f2;
    color: #4d6185;
}

.scroll-h {
    flex: 1;
    height: 16px;
    min-width: 0;
}

.panel .scroll-h {
    flex: none;
}

.scroll-v {
    width: 17px;
    flex-direction: column;
    flex: none;
}

.scroll button {
    flex: none;
    width: 16px;
    height: 16px;
    border: 1px solid #fff;
    border-radius: 2px;
    background: linear-gradient(135deg, #d5e1fd, #b3cafb);
    box-shadow: inset 0 0 0 1px #b4c8f6;
}

.track {
    flex: 1;
    display: flex;
    align-items: center;
}

.scroll-v .track {
    flex-direction: column;
    justify-content: center;
}

.thumb {
    height: 15px;
    border: 1px solid #98b1ee;
    border-radius: 2px;
    background:
        repeating-linear-gradient(90deg, #eef4fe 0 1px, #8cb0f8 1px 2px) center / 8px 6px no-repeat,
        linear-gradient(#cad9fd, #b9cdfb);
}

.thumb-timeline {
    width: 16%;
    margin-left: 1px;
}

.thumb-stage-h {
    width: 62%;
    margin-left: 19%;
}

.thumb-code {
    width: 44%;
}

.thumb-stage-v {
    width: 15px;
    height: 33%;
    background:
        repeating-linear-gradient(#eef4fe 0 1px, #8cb0f8 1px 2px) center / 6px 8px no-repeat,
        linear-gradient(90deg, #cad9fd, #b9cdfb);
}

.disabled {
    color: #c9c7ba;
    background: #f4f3ec;
}

.disabled button {
    background: #f0efe6;
    box-shadow: inset 0 0 0 1px #e4e2d5;
}

.up {
    transform: rotate(180deg);
}

.left {
    transform: rotate(90deg);
}

.right {
    transform: rotate(-90deg);
}

/* stage */
.stage {
    flex: 1;
    min-height: 0;
    display: grid;
    grid-template-columns: 19px minmax(0, 1fr) 17px;
    grid-template-rows: 18px minmax(0, 1fr) 16px;
    border: 1px solid #6b675b;
    border-right: 2px solid #fdfbf0;
    background: #ece9d8;
}

.ruler-h {
    grid-column: 1 / 4;
    margin-left: 18px;
    padding-left: 27px;
    display: flex;
    overflow: hidden;
    background: repeating-linear-gradient(90deg, transparent 0 2px, #222 2px 3px, transparent 3px 5px) 0 100% / 100% 4px no-repeat;
}

.ruler-h span {
    flex: none;
    width: 50px;
    padding: 1px 0 0 1px;
    border-left: 1px solid #000;
}

.ruler-v {
    grid-row: 2 / 4;
    overflow: hidden;
    background: repeating-linear-gradient(transparent 0 4px, #222 4px 5px) 100% 0 / 4px 100% no-repeat;
}

/* labels read upwards, so the box is turned over */
.ruler-v span {
    display: block;
    width: 19px;
    height: 50px;
    padding: 1px 2px 0 0;
    border-top: 1px solid #000;
    writing-mode: vertical-rl;
    transform: rotate(180deg);
}

.canvas {
    background: #d0d0d0;
    overflow: hidden;
}

.page {
    width: 550px;
    height: 100%;
    margin-left: 175px;
    background: #fff;
}

.stage .scroll-h {
    grid-column: 2;
}

/* splitters */
.split-h {
    flex: none;
    height: 8px;
    background: repeating-linear-gradient(90deg, #707070 0 1px, #9c9c9c 1px 2px) center / calc(100% - 4px) 4px no-repeat;
}

.split-v {
    flex: none;
    width: 7px;
    background: repeating-linear-gradient(#707070 0 1px, #9c9c9c 1px 2px) center / 3px calc(100% - 4px) no-repeat;
}

/* panels */
.panel-head {
    height: 26px;
    padding: 0 7px 0 2px;
    display: flex;
    align-items: center;
    gap: 2px;
    border: 1px solid #222;
    background: linear-gradient(#646464, #484848);
}

.panel-head h2 {
    flex: 1;
    padding-top: 2px;
    font-family: "Liberation Mono", monospace;
    font-size: 10px;
    color: #fff;
}

.panel-head.dim {
    padding-right: 6px;
}

.panel-head.dim h2 {
    padding: 0 0 3px 17px;
    font-family: inherit;
    font-size: 12px;
    color: #000;
}

.head-btn {
    width: 19px;
    height: 19px;
    border: 1px solid #101c22;
    border-radius: 3px;
    background: linear-gradient(#42626c, #25434e);
}

.head-btn.red {
    border-color: #3a0a0a;
    background: linear-gradient(#c03a3a, #9a1c20);
}

.head-btn.dark {
    border-color: #111;
    background: linear-gradient(#4c4c4c, #383838);
}

.code {
    height: 50px;
    display: flex;
    border-top: 1px solid #999;
    background: #fff;
}

.line-no {
    width: 41px;
    padding: 3px 19px 0 0;
    text-align: right;
    background: #ece9d8;
}

.fold {
    width: 20px;
    background: repeating-conic-gradient(#fff 0 25%, #e4e2d4 0 50%) 0 0 / 2px 2px;
}

.code-text {
    flex: 1;
    resize: none;
}

.bottom {
    flex: none;
    height: 142px;
    display: flex;
}

.bottom .panel {
    display: flex;
    flex-direction: column;
    min-width: 0;
    border-right: 1px solid #6a6a6a;
}

.properties {
    flex: 464;
}

.transform {
    flex: 470;
}

.prop-body {
    flex: 1;
    min-height: 0;
    margin-top: 1px;
    display: flex;
    overflow: hidden;
    border-top: 1px solid #6a6a6a;
}

.frame-box {
    flex: none;
    width: 138px;
    height: 90px;
    margin-top: 6px;
    padding: 4px 6px 0 5px;
    border: 1px solid #a3a08e;
    border-left: none;
    border-radius: 5px;
    color: #e8e8e8;
}

.frame-box h3 {
    padding-left: 30px;
}

.name-row {
    display: flex;
    align-items: center;
    gap: 2px;
    margin-top: 3px;
}

.name-row .field {
    flex: 1;
    min-width: 0;
    height: 23px;
    color: #000;
}

.sound {
    flex: 1;
    margin-left: 11px;
    padding: 7px 0 0 49px;
    border-left: 2px solid #f0eee2;
    display: grid;
    grid-template-columns: 69px 113px;
    grid-template-rows: 22px 36px 24px;
    align-items: center;
    justify-content: start;
}

.sound-note {
    grid-column: 2;
    padding-top: 5px;
    color: #e8e8e8;
}

.easing {
    width: 68px;
    color: #d5d5d5;
    border-color: #777;
    box-shadow: none;
    background: linear-gradient(#9c9c9c, #868686);
}

.tabs {
    flex: none;
    height: 26px;
    padding-left: 4px;
    display: flex;
    align-items: flex-start;
    border-top: 1px solid #5c5c5c;
    background: linear-gradient(#c0c0c0 0 1px, #a8a8a8 1px 5px, #555 5px 6px, #7c7c7c 6px);
}

.tab {
    height: 19px;
    margin-top: 5px;
    padding: 0 1px 0 3px;
    font-family: "Liberation Mono", monospace;
    font-size: 10px;
    color: #fff;
    border: 1px solid #555;
    border-top: none;
}

.tab.active {
    color: #000;
    background: #a8a8a8;
    border-color: #a8a8a8 #555 #d0d0d0 #d0d0d0;
}

/* right dock */
.dock {
    flex: none;
    width: 214px;
    display: flex;
    flex-direction: column;
}

.shape-body {
    padding: 5px 3px 17px;
    display: flex;
    flex-direction: column;
    border-bottom: 1px solid #666;
}

.fill-row {
    display: flex;
    align-items: center;
    gap: 5px;
    height: 21px;
}

.fill-row label {
    width: 29px;
}

.pen-size {
    width: 34px;
}

.fill-row .combo {
    flex: 1;
}

.swatch {
    width: 54px;
    height: 20px;
    margin-left: 8px;
}

.color-area {
    display: flex;
    align-items: flex-start;
    justify-content: space-between;
    margin: 4px 2px 6px 5px;
}

.brush-area {
    margin-top: 42px;
}

.picker {
    width: 117px;
    padding-top: 4px;
}

.spectrum {
    position: relative;
    height: 74px;
    background:
        linear-gradient(rgba(144, 144, 144, 0), #909090),
        linear-gradient(90deg, #f00, #ff0, #0f0, #0ff, #00f, #f0f, #f00);
}

.shade {
    position: relative;
    height: 20px;
    margin-top: 4px;
}

.shade-pen {
    background: linear-gradient(90deg, #000, #fff);
}

.shade-brush {
    background: linear-gradient(90deg, #000, #1b60e2 50%, #fff);
}

.spot {
    position: absolute;
    width: 8px;
    height: 8px;
    border: 1px solid #000;
    box-shadow: inset 0 0 0 1px #fff;
}

.spot-pen {
    left: -4px;
    bottom: -4px;
}

.spot-brush {
    left: 67px;
    top: 11px;
}

.slider {
    position: absolute;
    top: -1px;
    width: 8px;
    height: 22px;
    border: 1px solid #000;
    box-shadow: inset 0 0 0 1px #fff;
}

.slider-pen {
    left: -4px;
}

.slider-brush {
    left: 73px;
}

.channels {
    display: grid;
    grid-template-columns: 14px 51px;
    row-gap: 4px;
}

.spin {
    display: flex;
    height: 22px;
}

.spin input {
    width: 38px;
    padding: 0 3px;
    background: #fff;
    border: 1px solid #555;
}

.spin button {
    width: 13px;
    background: #ece9d8;
}

.channels label {
    padding-top: 3px;
}

.hex {
    width: 92px;
    height: 22px;
    margin: 0 3px 8px auto;
}

.picker-row {
    display: flex;
    align-items: center;
    gap: 2px;
    padding: 1px 3px 0 0;
    white-space: nowrap;
}

.picker-row .combo {
    flex: 1;
    min-width: 0;
}

.combo-cjk {
    font-family: "Noto Sans CJK SC", sans-serif;
    font-size: 12px;
}

.movie {
    flex: 1;
    display: flex;
    flex-direction: column;
    padding-bottom: 4px;
    border-bottom: 1px solid #666;
}

.dock-tools {
    height: 28px;
    padding-left: 10px;
    display: flex;
    align-items: center;
}

.dock-tools button {
    width: 29px;
    height: 22px;
}

.tree {
    flex: 1;
    margin-right: 5px;
    padding: 2px 12px;
    list-style: none;
    background: #fff;
}

.tree li {
    display: flex;
    align-items: center;
    gap: 2px;
}

.tree li::before {
    content: "";
    width: 10px;
    border-top: 1px dotted #999;
}

.library {
    height: 56px;
    flex: none;
}

.library .dock-tools {
    height: 30px;
}

/* status bar */
.statusbar {
    flex: none;
    height: 20px;
    padding-left: 3px;
    display: flex;
    align-items: center;
    font-size: 12px;
    color: #ececec;
    border-top: 1px solid #b5b5b5;
    box-shadow: 0 -1px 0 #555;
}

.status-text {
    flex: 1;
    padding-top: 2px;
}

.status-cell,
.status-end {
    min-width: 26px;
    height: 16px;
    padding: 1px 0 0 2px;
    font-size: 11px;
    border-left: 1px solid #5a5a5a;
    box-shadow: inset 1px 0 0 #b0b0b0;
}

.status-end {
    width: 49px;
    padding: 4px 3px 0 0;
    display: flex;
    justify-content: flex-end;
}
```
